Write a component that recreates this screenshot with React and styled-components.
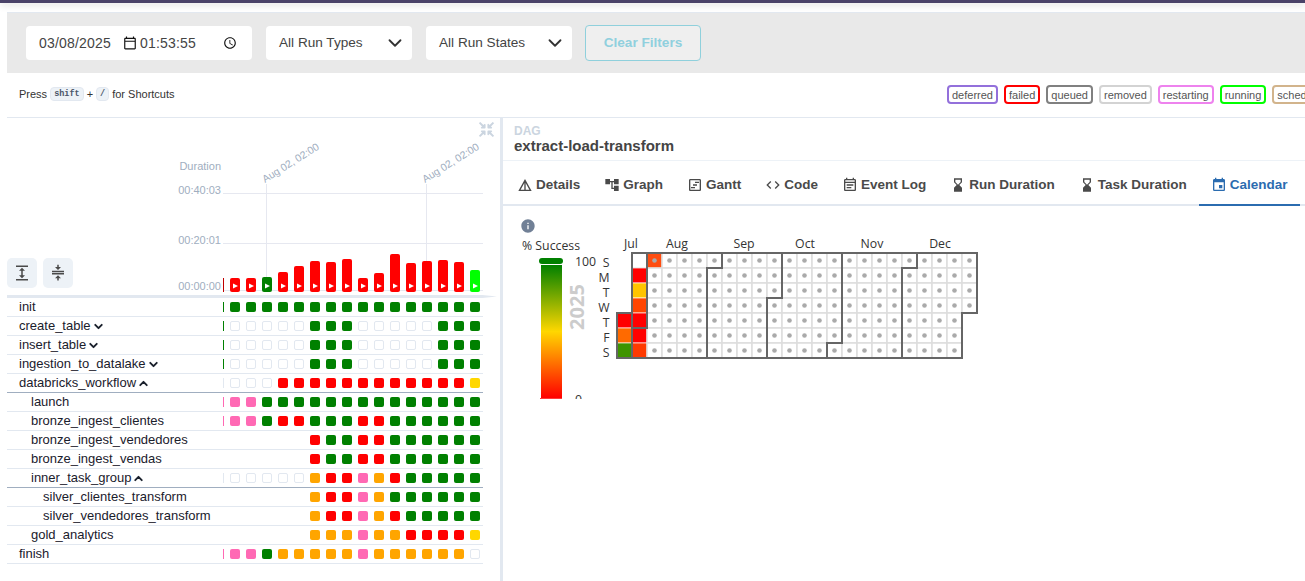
import React from 'react'
import styled, { createGlobalStyle } from 'styled-components'
import {
  MdDetails, MdAccountTree, MdOutlineViewTimeline, MdCode, MdOutlineEventNote,
  MdHourglassBottom, MdEvent, MdExpand, MdCompress, MdInfo,
  MdOutlineCalendarToday, MdOutlineAccessTime,
} from 'react-icons/md'
import { FaCompressArrowsAlt } from 'react-icons/fa'
import { FiChevronDown, FiChevronUp } from 'react-icons/fi'

const GlobalStyle = createGlobalStyle`
html,body{
  margin:0;
  height:100%;
  overflow:hidden;
  background:#fff;
  font-family:"Liberation Sans",Arial,sans-serif;
}
`

const STATUS = {
  g: '#008000',
  r: '#ff0000',
  o: '#ffa500',
  p: '#ff69b4',
  y: '#ffd700',
  l: '#00ff00',
}

const LEGEND = [
  ['deferred', '#9370db'],
  ['failed', '#ff0000'],
  ['queued', '#808080'],
  ['removed', '#d3d3d3'],
  ['restarting', '#ee82ee'],
  ['running', '#00ff00'],
  ['scheduled', '#d2b48c'],
]

const TABS = [
  ['Details', MdDetails],
  ['Graph', MdAccountTree],
  ['Gantt', MdOutlineViewTimeline],
  ['Code', MdCode],
  ['Event Log', MdOutlineEventNote],
  ['Run Duration', MdHourglassBottom],
  ['Task Duration', MdHourglassBottom],
  ['Calendar', MdEvent],
]

// first char = the 1px sliver at the start of the row, e = empty box, . = nothing
const TASKS = [
  { name: 'init', level: 0, cells: 'ggggggggggggggggg' },
  { name: 'create_table', level: 0, toggle: 'down', cells: 'geeeeegggeeeeeggg' },
  { name: 'insert_table', level: 0, toggle: 'down', cells: 'geeeeegggeeeeeggg' },
  { name: 'ingestion_to_datalake', level: 0, toggle: 'down', cells: 'geeeeegggeeeeeggg' },
  { name: 'databricks_workflow', level: 0, toggle: 'up', cells: 'eeeerrrrrrrrrrrry' },
  { name: 'launch', level: 1, cells: 'pppgggggggggggggg' },
  { name: 'bronze_ingest_clientes', level: 1, cells: 'pppgrrgggrrgggggg' },
  { name: 'bronze_ingest_vendedores', level: 1, cells: '......rggrrgggggg' },
  { name: 'bronze_ingest_vendas', level: 1, cells: '......rggrrgggggg' },
  { name: 'inner_task_group', level: 1, toggle: 'up', cells: 'eeeeeeorrporggggg' },
  { name: 'silver_clientes_transform', level: 2, cells: '......orrpogggggg' },
  { name: 'silver_vendedores_transform', level: 2, cells: '......orrporggggg' },
  { name: 'gold_analytics', level: 1, cells: '......ooopoorrrry' },
  { name: 'finish', level: 0, cells: 'pppgooooopooooooe' },
]

const BARS = [
  [278, 'r'], [278, 'r'], [277, 'g'], [272, 'r'], [266, 'r'], [261, 'r'], [262, 'r'], [259, 'r'],
  [278, 'r'], [273, 'r'], [254, 'r'], [263, 'r'], [261, 'r'], [260, 'r'], [262, 'r'], [270, 'l'],
]

const Page = styled.div`
display:flex;
flex-direction:column;
height:100vh;
`
const TopBar = styled.div`
height:3px;
flex:none;
background:#4a4268;
box-shadow:0 2px 7px rgba(0,0,0,0.18);
`
const Main = styled.div`
flex:1;
min-height:0;
display:flex;
flex-direction:column;
padding:9px 0 0 7px;
`
const FilterBar = styled.div`
flex:none;
height:61px;
box-sizing:border-box;
display:flex;
align-items:center;
gap:14px;
padding-left:19px;
background:#e9e9e9;
border-top:1px solid #e2e8f0;
`
const DateField = styled.div`
width:226px;
height:34px;
box-sizing:border-box;
display:flex;
align-items:center;
padding:0 0 1px 13px;
background:#fff;
border-radius:4px;
font-size:14px;
letter-spacing:0.2px;
color:#444;
& svg{
  flex:none;
  color:#111;
}
`
const DateValue = styled.span`
width:84px;
`
const TimeValue = styled.span`
width:83px;
margin-left:3px;
`
const Select = styled.div`
width:146px;
height:34px;
box-sizing:border-box;
display:flex;
align-items:center;
justify-content:space-between;
padding:0 6px 1px 13px;
background:#fff;
border-radius:4px;
font-size:13.6px;
color:#444;
& svg{
  stroke-width:2;
  color:#333;
}
`
const ClearButton = styled.button`
width:116px;
height:36px;
margin-left:-1px;
padding:0 0 1px;
background:#efefef;
border:1px solid #8fd0dc;
border-radius:4px;
font-family:inherit;
font-size:13.6px;
font-weight:bold;
color:#90d0de;
`
const LegendRow = styled.div`
flex:none;
height:45px;
box-sizing:border-box;
display:flex;
align-items:center;
overflow:hidden;
padding-left:12px;
border-bottom:1px solid #e2e8f0;
`
const Shortcuts = styled.div`
flex:0 0 928px;
display:flex;
align-items:center;
gap:3px;
padding-bottom:2px;
font-size:11px;
color:#333;
`
const Kbd = styled.kbd`
padding:1px 3px;
background:#edf2f7;
border:1px solid #e2e8f0;
border-radius:4px;
font-family:"Liberation Mono",monospace;
font-size:8.5px;
font-weight:bold;
color:#4a5568;
`
const LegendBadges = styled.div`
display:flex;
gap:6px;
flex:none;
margin-top:-1px;
`
const Badge = styled.span`
height:19px;
box-sizing:border-box;
display:flex;
align-items:center;
padding:0 3px;
border:2px solid ${p => p.$color};
border-radius:4px;
font-size:11px;
color:#555;
`
const Panels = styled.div`
flex:1;
min-height:0;
display:flex;
`
const LeftPanel = styled.div`
flex:0 0 493px;
position:relative;
`
const CollapseIcon = styled(FaCompressArrowsAlt)`
position:absolute;
top:4px;
right:6px;
font-size:15px;
color:#cbd5e0;
`
const ChartHead = styled.div`
height:176px;
display:flex;
align-items:flex-end;
justify-content:space-between;
`
const ToolButtons = styled.div`
display:flex;
gap:6px;
padding-bottom:6px;
`
const ToolButton = styled.div`
width:30px;
height:30px;
display:flex;
align-items:center;
justify-content:center;
background:#edf2f7;
border-radius:5px;
font-size:18px;
color:#4a4a4a;
`
const HeadRule = styled.div`
width:490px;
height:3px;
margin-top:1px;
background:#e2e8f0;
clip-path:polygon(0 0,97% 0,100% 50%,97% 100%,0 100%);
`
const TaskRow = styled.div`
width:476px;
height:19px;
box-sizing:border-box;
display:flex;
align-items:center;
border-bottom:1px solid ${p => (p.$open ? '#a0aec0' : '#e2e8f0')};
`
const TaskName = styled.div`
flex:0 0 216px;
box-sizing:border-box;
display:flex;
align-items:center;
gap:1px;
padding:0 0 2px ${p => 12 + p.$level * 12}px;
font-size:13px;
color:#1a202c;
& svg{
  stroke-width:3.5;
  margin-top:2px;
}
`
const Sliver = styled.span`
flex:none;
width:1px;
height:10px;
margin-right:6px;
background:${p => p.$color};
`
const Cell = styled.span`
flex:none;
width:10px;
height:10px;
box-sizing:border-box;
margin-right:6px;
border-radius:2px;
background:${p => p.$color || 'transparent'};
border:${p => (p.$empty ? '1px solid #e2e8f0' : 'none')};
`
const RightPanel = styled.div`
flex:1;
min-width:0;
overflow:hidden;
border-left:3px solid #e2e8f0;
`
const DagHead = styled.div`
height:43px;
box-sizing:border-box;
padding:6px 0 0 11px;
border-bottom:1px solid #edf2f7;
`
const DagLabel = styled.div`
font-size:12px;
font-weight:bold;
line-height:14px;
color:#cbd5e0;
`
const DagName = styled.div`
font-size:15px;
font-weight:bold;
line-height:16px;
color:#444;
`
const TabBar = styled.div`
height:45px;
box-sizing:border-box;
display:flex;
padding-left:2px;
border-bottom:2px solid #e2e8f0;
`
const Tab = styled.div`
flex:none;
height:45px;
box-sizing:border-box;
display:flex;
align-items:center;
gap:3px;
padding:4px 12px 0;
white-space:nowrap;
font-size:13.5px;
font-weight:bold;
color:${p => (p.$active ? '#2b6cb0' : '#4a4a4a')};
border-bottom:2px solid ${p => (p.$active ? '#2b6cb0' : 'transparent')};
& svg{
  flex:none;
}
`
const TabBody = styled.div`
padding:12px 0 0 7px;
`
const InfoIcon = styled(MdInfo)`
display:block;
margin-left:10px;
font-size:16px;
color:#718096;
`
const CalendarSvg = styled.svg`
display:block;
font-family:"Open Sans","Noto Sans",sans-serif;
font-size:12.3px;
fill:#333;
`

const DurationChart = () => (
  <svg width="325" height="176" viewBox="175 118 325 176" fontFamily="Liberation Sans" fontSize="11">
    <g stroke="#e6e8f0">
      <line x1="223" x2="483" y1="193.5" y2="193.5" />
      <line x1="223" x2="483" y1="243.5" y2="243.5" />
      <line x1="223" x2="483" y1="290.5" y2="290.5" />
      <line x1="266.5" x2="266.5" y1="184" y2="280" />
      <line x1="426.5" x2="426.5" y1="184" y2="265" />
    </g>
    <g fill="#a0aec0" textAnchor="end">
      <text x="221" y="170">Duration</text>
      <text x="221" y="194">00:40:03</text>
      <text x="221" y="244">00:20:01</text>
      <text x="221" y="290">00:00:00</text>
    </g>
    <g fill="#a0aec0" fontSize="10.4">
      <text transform="translate(265 183) rotate(-32)">Aug 02, 02:00</text>
      <text transform="translate(425 183) rotate(-32)">Aug 02, 02:00</text>
    </g>
    <rect x="223" y="278" width="1" height="14" fill="#c00000" />
    {BARS.map(([top, s], i) => {
      const x = 230 + i * 16
      return (
        <g key={i}>
          <rect x={x} y={top} width="10" height={292 - top} rx="2" fill={STATUS[s]} />
          <polygon points={`${x + 3},283.5 ${x + 3},288.5 ${x + 8},286`} fill="#fff" />
        </g>
      )
    })}
  </svg>
)

const TaskCells = ({ cells }) => {
  const first = cells[0]
  return (
    <>
      <Sliver $color={first === '.' ? 'transparent' : first === 'e' ? '#e2e8f0' : STATUS[first]} />
      {cells.slice(1).split('').map((c, i) => (
        <Cell key={i} $empty={c === 'e'} $color={STATUS[c]} />
      ))}
    </>
  )
}

const COLORED = {
  '0,4': '#ff0000', '0,5': '#ff6a00', '0,6': '#3f9400',
  '1,1': '#ff0000', '1,2': '#ffc400', '1,3': '#ff4500', '1,4': '#ff0000', '1,5': '#ff0000', '1,6': '#ff3a00',
  '2,0': '#ff4d10',
}
const MONTHS = [['Jul', 631], ['Aug', 677], ['Sep', 744], ['Oct', 805], ['Nov', 872], ['Dec', 940]]
const DAYS = ['S', 'M', 'T', 'W', 'T', 'F', 'S']
const MONTH_LINES = [
  'M632 253H977V313H962V358H617V313H632Z',
  'M632 313V358M632 328H647V253',
  'M707 358V268H722V253',
  'M767 358V298H782V253',
  'M827 358V343H842V253',
  'M902 358V268H917V253',
]

const calendarCells = () => {
  const out = []
  for (let c = 0; c < 24; c++) {
    for (let r = 0; r < 7; r++) {
      if (c === 0 && r < 4) continue
      if (c === 23 && r > 3) continue
      const x = 617 + c * 15
      const y = 253 + r * 15
      const filled = COLORED[`${c},${r}`]
      out.push(
        <g key={`${c}-${r}`}>
          <rect x={x} y={y} width="15" height="15" fill={filled || '#fff'} stroke={filled ? 'rgba(255,255,255,0.45)' : '#ddd'} strokeWidth="1.5" />
          {c > 1 && <circle cx={x + 7.5} cy={y + 7.5} r="2.3" fill="#aaa" />}
        </g>
      )
    }
  }
  return out
}

const CalendarChart = () => (
  <CalendarSvg width="490" height="165" viewBox="510 234 490 165">
    <defs>
      <linearGradient id="successScale" x1="0" y1="0" x2="0" y2="1">
        <stop offset="0" stopColor="#008000" />
        <stop offset="0.5" stopColor="#ffd700" />
        <stop offset="1" stopColor="#ff0000" />
      </linearGradient>
    </defs>
    <text x="522" y="250">% Success</text>
    <rect x="539" y="258" width="24" height="6" rx="3" fill="#008000" />
    <rect x="541" y="265" width="21" height="133" fill="url(#successScale)" />
    <rect x="540" y="398" width="22" height="2" fill="#ff3b3b" />
    <text x="575" y="266">100</text>
    <text x="575" y="404">0</text>
    <text transform="translate(584 307) rotate(-90)" textAnchor="middle" fontSize="20" fontWeight="bold" fill="#ccc">2025</text>
    {DAYS.map((d, i) => (
      <text key={i} x="609.5" y={266.5 + i * 15} textAnchor="end">{d}</text>
    ))}
    {MONTHS.map(([m, x]) => (
      <text key={m} x={x} y="248" textAnchor="middle">{m}</text>
    ))}
    {calendarCells()}
    <g fill="none" stroke="#666" strokeWidth="2">
      {MONTH_LINES.map(d => <path key={d} d={d} />)}
    </g>
  </CalendarSvg>
)

function App() {
  return (
    <React.Fragment>
      <GlobalStyle />
      <Page>
        <TopBar />
        <Main>
          <FilterBar>
            <DateField>
              <DateValue>03/08/2025</DateValue>
              <MdOutlineCalendarToday size={14} />
              <TimeValue>01:53:55</TimeValue>
              <MdOutlineAccessTime size={14} />
            </DateField>
            <Select>All Run Types <FiChevronDown size={22} /></Select>
            <Select>All Run States <FiChevronDown size={22} /></Select>
            <ClearButton>Clear Filters</ClearButton>
          </FilterBar>
          <LegendRow>
            <Shortcuts>
              Press <Kbd>shift</Kbd> + <Kbd>/</Kbd> for Shortcuts
            </Shortcuts>
            <LegendBadges>
              {LEGEND.map(([name, color]) => <Badge key={name} $color={color}>{name}</Badge>)}
            </LegendBadges>
          </LegendRow>
          <Panels>
            <LeftPanel>
              <CollapseIcon />
              <ChartHead>
                <ToolButtons>
                  <ToolButton><MdExpand /></ToolButton>
                  <ToolButton><MdCompress /></ToolButton>
                </ToolButtons>
                <DurationChart />
              </ChartHead>
              <HeadRule />
              {TASKS.map(t => (
                <TaskRow key={t.name} $open={t.toggle === 'up'}>
                  <TaskName $level={t.level}>
                    {t.name}
                    {t.toggle === 'down' && <FiChevronDown size={13} />}
                    {t.toggle === 'up' && <FiChevronUp size={13} />}
                  </TaskName>
                  <TaskCells cells={t.cells} />
                </TaskRow>
              ))}
            </LeftPanel>
            <RightPanel>
              <DagHead>
                <DagLabel>DAG</DagLabel>
                <DagName>extract-load-transform</DagName>
              </DagHead>
              <TabBar>
                {TABS.map(([label, Icon]) => (
                  <Tab key={label} $active={label === 'Calendar'}>
                    <Icon size={16} />
                    {label}
                  </Tab>
                ))}
              </TabBar>
              <TabBody>
                <InfoIcon />
                <CalendarChart />
              </TabBody>
            </RightPanel>
          </Panels>
        </Main>
      </Page>
    </React.Fragment>
  )
}

export default App
